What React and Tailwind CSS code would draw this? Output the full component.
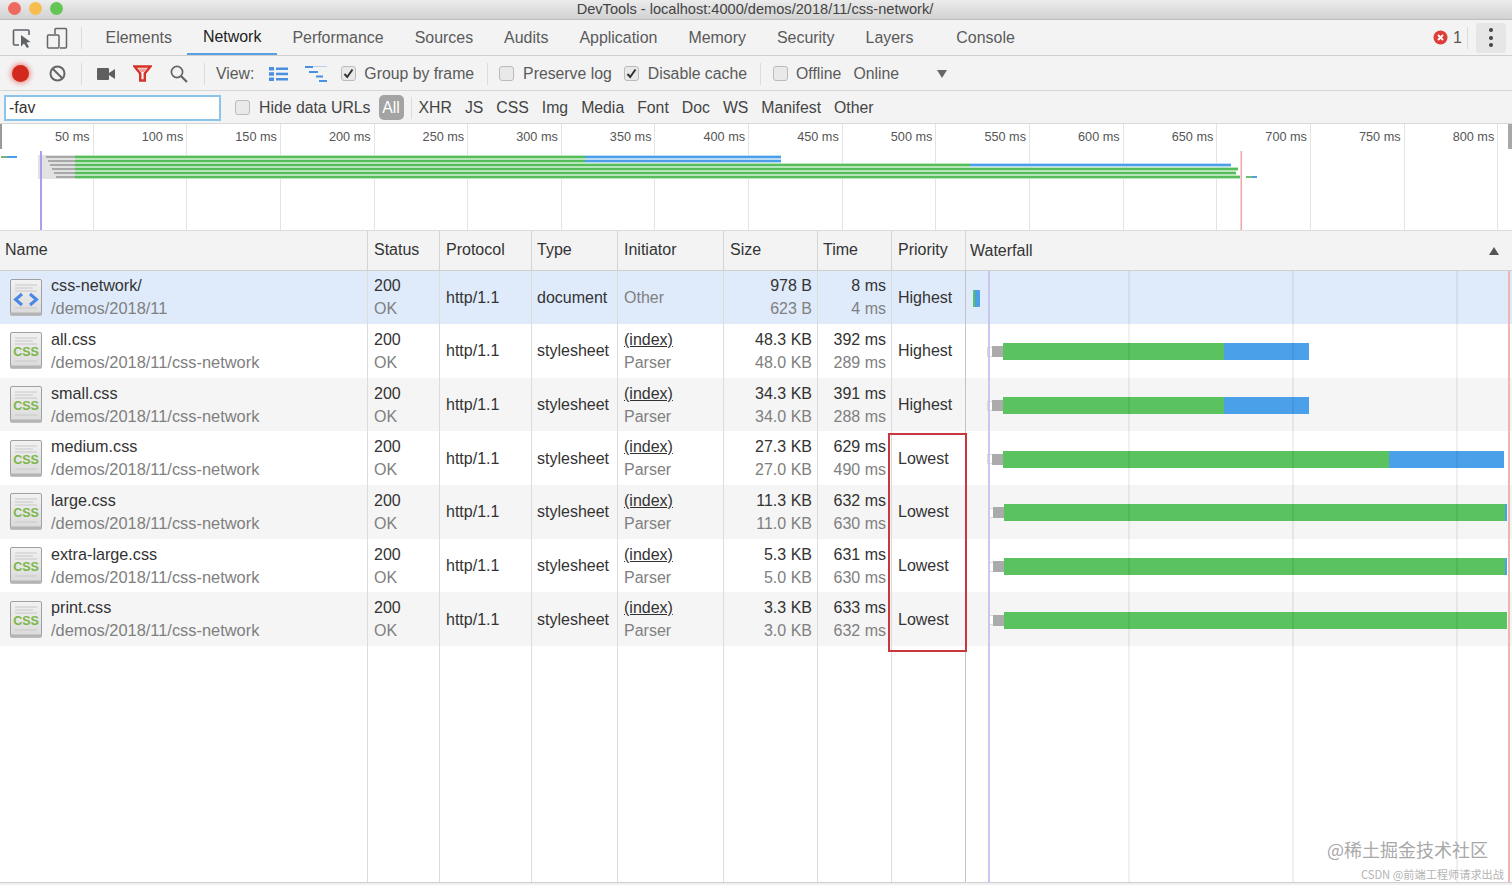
const font = { fontFamily: '"Liberation Sans", Arial, sans-serif' };

const COLS = "grid-cols-[368px_72px_92px_86px_106px_94px_74px_74px_546px]";

const tabs = ["Elements", "Network", "Performance", "Sources", "Audits", "Application", "Memory", "Security", "Layers"];
const filters = ["XHR", "JS", "CSS", "Img", "Media", "Font", "Doc", "WS", "Manifest", "Other"];
const ticks = [50, 100, 150, 200, 250, 300, 350, 400, 450, 500, 550, 600, 650, 700, 750, 800];

const rows = [
  { name: "css-network/", path: "/demos/2018/11", type: "document", html: true, init: "Other", size: ["978 B", "623 B"], time: ["8 ms", "4 ms"], priority: "Highest" },
  { name: "all.css", path: "/demos/2018/11/css-network", type: "stylesheet", size: ["48.3 KB", "48.0 KB"], time: ["392 ms", "289 ms"], priority: "Highest", green: 221, blue: 85, start: 21 },
  { name: "small.css", path: "/demos/2018/11/css-network", type: "stylesheet", size: ["34.3 KB", "34.0 KB"], time: ["391 ms", "288 ms"], priority: "Highest", green: 221, blue: 85, start: 21 },
  { name: "medium.css", path: "/demos/2018/11/css-network", type: "stylesheet", size: ["27.3 KB", "27.0 KB"], time: ["629 ms", "490 ms"], priority: "Lowest", green: 386, blue: 115, start: 21 },
  { name: "large.css", path: "/demos/2018/11/css-network", type: "stylesheet", size: ["11.3 KB", "11.0 KB"], time: ["632 ms", "630 ms"], priority: "Lowest", green: 501, blue: 2, start: 22 },
  { name: "extra-large.css", path: "/demos/2018/11/css-network", type: "stylesheet", size: ["5.3 KB", "5.0 KB"], time: ["631 ms", "630 ms"], priority: "Lowest", green: 501, blue: 2, start: 22 },
  { name: "print.css", path: "/demos/2018/11/css-network", type: "stylesheet", size: ["3.3 KB", "3.0 KB"], time: ["633 ms", "632 ms"], priority: "Lowest", green: 503, blue: 0, start: 22 },
];

const headers = ["Name", "Status", "Protocol", "Type", "Initiator", "Size", "Time", "Priority"];

function Checkbox({ checked }) {
  return (
    <span className="flex h-[15px] w-[15px] shrink-0 items-center justify-center rounded-[3px] border border-[#bbb] bg-[#e9e9e9]">
      {checked && (
        <svg width="11" height="11" viewBox="0 0 11 11">
          <path d="M1.5 6 L4.2 9 L9.5 1.5" fill="none" stroke="#333" strokeWidth="2" />
        </svg>
      )}
    </span>
  );
}

function Sep({ className }) {
  return <span className={`h-[22px] w-px shrink-0 bg-[#dcdcdc] ${className}`} />;
}

function FileIcon({ html }) {
  return (
    <svg width="32" height="37" viewBox="0 0 32 37" className="shrink-0">
      <defs>
        <linearGradient id="page" x1="0" y1="0" x2="0" y2="1">
          <stop offset="0" stopColor="#f2f2f2" />
          <stop offset="1" stopColor="#dadada" />
        </linearGradient>
      </defs>
      <rect x="0.5" y="0.5" width="31" height="35.5" rx="1.5" fill="url(#page)" stroke="#a0a0a0" />
      <rect x="0.5" y="33.5" width="31" height="3" fill="#b4b4b4" />
      <path d="M5 6h22M5 9h18M5 12h22M5 29h22" stroke="#c8c8c8" strokeWidth="1" />
      {html ? (
        <path d="M12 15 L5.5 20.5 L12 26 M20 15 L26.5 20.5 L20 26" fill="none" stroke="#4a86e8" strokeWidth="3" />
      ) : (
        <text x="16" y="24" textAnchor="middle" fontSize="12.5" fontWeight="700" fill="#7cb648" style={font}>CSS</text>
      )}
    </svg>
  );
}

function TwoLine({ top, bottom, right, underline }) {
  return (
    <div className={`flex h-full flex-col justify-center leading-[23px] ${right ? "items-end pr-[6px]" : "pl-[6px]"}`}>
      <span className={`text-[#333] ${underline ? "underline" : ""}`}>{top}</span>
      <span className="text-[#808080]">{bottom}</span>
    </div>
  );
}

function WaterfallBar({ row }) {
  if (!row.green) {
    return (
      <div className="flex h-full items-center pl-[7px] pt-[2px]">
        <span className="h-[17px] w-[2px] bg-[#5bc25f]" />
        <span className="h-[17px] w-[5px] rounded-r-[1px] bg-[#4a9fe8]" />
      </div>
    );
  }
  return (
    <div className="flex h-full items-center pt-[2px]" style={{ paddingLeft: row.start }}>
      <span className="h-[10px] w-[5px] border border-r-0 border-[#dcdcdc] bg-white" />
      <span className="h-[11px] w-[11px] bg-[#ababab]" />
      <span className="h-[17px] bg-[#5ac25e]" style={{ width: row.green }} />
      {row.blue > 0 && <span className="h-[17px] bg-[#4ba0ea]" style={{ width: row.blue }} />}
    </div>
  );
}

function Overview() {
  const lines = [
    [157, 585, 781],
    [161, 585, 781],
    [165, 970, 1231],
    [169, 1238, 1238],
    [173, 1236, 1236],
    [177, 1240, 1240],
  ];
  return (
    <svg width="1512" height="106" viewBox="0 124 1512 106" className="pointer-events-none absolute left-0 top-0">
      <rect x="0" y="124" width="2" height="25" fill="#9a9a9a" />
      <rect x="1508" y="124" width="4" height="25" fill="#a8a8a8" />
      <rect x="1" y="156" width="6" height="2" fill="#80b080" />
      <rect x="7" y="156" width="10" height="2" fill="#4a9fe8" />
      {lines.map(([y, g, b], i) => (
        <g key={i}>
          <rect x="38" y={y - 2} width="37" height="4" fill="#e2e2e2" />
          <rect x={46 + i * 2} y={y - 1} width={29 - i * 2} height="2" fill="#a8a8a8" />
          <rect x="75" y={y - 2} width={b - 75} height="4" fill="#b8e6bb" />
          <rect x="75" y={y - 1} width={g - 75} height="2" fill="#55bd5a" />
          {b > g && (
            <>
              <rect x={g} y={y - 2} width={b - g} height="4" fill="#bcdcf6" />
              <rect x={g} y={y - 1} width={b - g} height="2" fill="#4a9fe8" />
            </>
          )}
        </g>
      ))}
      <rect x="1246" y="176" width="6" height="2" fill="#6cc070" />
      <rect x="1252" y="176" width="5" height="2" fill="#4a9fe8" />
      <rect x="40" y="151" width="2" height="79" fill="#a9a0ea" />
      <rect x="1240.5" y="151" width="1.5" height="79" fill="#eba9a4" />
    </svg>
  );
}

export default function App() {
  return (
    <div className="relative flex h-[885px] w-[1512px] flex-col overflow-hidden bg-white text-[16px] text-[#444]" style={font}>
      {/* title bar */}
      <div className="relative flex h-[20px] shrink-0 items-center justify-center border-b border-[#bdbdbd] bg-gradient-to-b from-[#ececec] to-[#d2d2d2] pr-[2px] text-[14.6px] text-[#444]">
        <div className="absolute left-[8px] top-[2px] flex gap-[8px]">
          <span className="h-[13px] w-[13px] rounded-full bg-[#ee6a5f]" />
          <span className="h-[13px] w-[13px] rounded-full bg-[#f6bd4f]" />
          <span className="h-[13px] w-[13px] rounded-full bg-[#62c554]" />
        </div>
        DevTools - localhost:4000/demos/2018/11/css-network/
      </div>

      {/* panel tabs */}
      <div className="flex h-[36px] shrink-0 items-center border-b border-[#d0d0d0] bg-[#f3f3f3] pl-[12px]">
        <svg width="20" height="22" viewBox="0 0 20 22" fill="none" stroke="#5f6368" strokeWidth="1.6" className="shrink-0">
          <path d="M7 18 H2.5 a1 1 0 0 1 -1 -1 V4 a1 1 0 0 1 1 -1 H16 a1 1 0 0 1 1 1 V8" />
          <path d="M9 8 L9 19.5 L12 16.5 L15 21 L17 20 L14.5 15.5 L18.5 15 Z" fill="#5f6368" stroke="none" />
        </svg>
        <svg width="22" height="22" viewBox="0 0 22 22" fill="none" stroke="#666" strokeWidth="1.5" className="ml-[14px] shrink-0">
          <path d="M9 7 V2.5 a1 1 0 0 1 1 -1 H19.5 a1 1 0 0 1 1 1 V20 a1 1 0 0 1 -1 1 H14" />
          <rect x="1.5" y="8" width="11.5" height="13" rx="1" />
        </svg>
        <Sep className="ml-[13px]" />
        <div className="ml-[8px] flex h-full items-stretch text-[15.95px]">
          {tabs.map((t) => (
            <div
              key={t}
              className={`flex items-center px-[15.5px] ${t === "Network" ? "border-b-2 border-[#5a9fe0] text-[#222]" : "text-[#5a5a5a]"}`}
            >
              {t}
            </div>
          ))}
          <div className="ml-[12px] flex items-center px-[15.5px] text-[#5a5a5a]">Console</div>
        </div>
        <div className="ml-auto flex h-full items-center">
          <svg width="15" height="15" viewBox="0 0 15 15" className="shrink-0">
            <circle cx="7.5" cy="7.5" r="7" fill="#dc3f3a" />
            <path d="M5 5 L10 10 M10 5 L5 10" stroke="#fff" strokeWidth="1.8" />
          </svg>
          <span className="ml-[5px] text-[#555]">1</span>
          <Sep className="ml-[5px]" />
          <div className="ml-[8px] mr-[6px] flex h-[30px] w-[30px] flex-col items-center justify-center gap-[3.5px] rounded-[3px] bg-[#e6e6e6]">
            <span className="h-[4px] w-[4px] rounded-full bg-[#444]" />
            <span className="h-[4px] w-[4px] rounded-full bg-[#444]" />
            <span className="h-[4px] w-[4px] rounded-full bg-[#444]" />
          </div>
        </div>
      </div>

      {/* network toolbar */}
      <div className="flex h-[35px] shrink-0 items-center border-b border-[#d8d8d8] bg-[#f3f3f3] pl-[12px] pt-[1px] text-[15.8px] text-[#5a5a5a]">
        <span className="h-[17px] w-[17px] shrink-0 rounded-full bg-[#d2281e] shadow-[0_0_4px_2px_rgba(230,90,80,0.55)]" />
        <svg width="17" height="17" viewBox="0 0 17 17" fill="none" stroke="#666" strokeWidth="2" className="ml-[20px] shrink-0">
          <circle cx="8.5" cy="8.5" r="7" />
          <path d="M3.7 3.7 L13.3 13.3" />
        </svg>
        <Sep className="ml-[15px]" />
        <svg width="18" height="12" viewBox="0 0 18 12" className="ml-[15px] shrink-0">
          <rect x="0" y="0" width="12" height="12" rx="1" fill="#5f5f5f" />
          <path d="M12 5 L18 1 V11 L12 7 Z" fill="#5f5f5f" />
        </svg>
        <svg width="19" height="17" viewBox="0 0 19 17" fill="none" className="ml-[18px] shrink-0">
          <path d="M1.5 1.5 H17.5 L11.8 8.5 V15.5 H7.2 V8.5 Z" stroke="#d6322a" strokeWidth="2.4" />
          <path d="M5 3.5 H14 L11 7 H8 Z" fill="#eba09a" />
        </svg>
        <svg width="18" height="18" viewBox="0 0 18 18" fill="none" stroke="#666" strokeWidth="1.7" className="ml-[18px] shrink-0">
          <circle cx="7" cy="7" r="5.6" />
          <path d="M11 11 L17 17" strokeWidth="2.2" />
        </svg>
        <Sep className="ml-[16px]" />
        <span className="ml-[11px]">View:</span>
        <svg width="19" height="14" viewBox="0 0 19 14" fill="#4a90e2" className="ml-[15px] shrink-0">
          <rect x="0" y="0" width="5" height="3.5" />
          <rect x="0" y="5.2" width="5" height="3.5" />
          <rect x="0" y="10.5" width="5" height="3.5" />
          <rect x="7" y="0.5" width="12" height="2.5" />
          <rect x="7" y="5.7" width="12" height="2.5" />
          <rect x="7" y="11" width="12" height="2.5" />
        </svg>
        <svg width="22" height="16" viewBox="0 0 22 16" fill="#4a90e2" className="ml-[17px] shrink-0">
          <rect x="0" y="0" width="8" height="2" />
          <rect x="8" y="0" width="14" height="1" opacity="0.35" />
          <rect x="4" y="5" width="9" height="2" />
          <rect x="11" y="9.5" width="7" height="2" />
          <rect x="14" y="14" width="8" height="2" />
        </svg>
        <span className="ml-[14px] flex items-center gap-[8px]">
          <Checkbox checked />
          Group by frame
        </span>
        <Sep className="ml-[13px]" />
        <span className="ml-[11px] flex items-center gap-[9px]">
          <Checkbox />
          Preserve log
        </span>
        <span className="ml-[12px] flex items-center gap-[9px]">
          <Checkbox checked />
          Disable cache
        </span>
        <Sep className="ml-[13px]" />
        <span className="ml-[12px] flex items-center gap-[8px]">
          <Checkbox />
          Offline
        </span>
        <span className="ml-[12px]">Online</span>
        <svg width="10" height="8" viewBox="0 0 10 8" className="ml-[38px] shrink-0">
          <path d="M0 0 H10 L5 8 Z" fill="#666" />
        </svg>
      </div>

      {/* filter bar */}
      <div className="flex h-[33px] shrink-0 items-center border-b border-[#d8d8d8] bg-[#f3f3f3] pl-[4px] pt-[1px] text-[15.8px] text-[#444]">
        <div className="flex h-[26px] w-[217px] shrink-0 items-center border-2 border-[#8ac4ea] bg-white pl-[3px] text-[#333]">-fav</div>
        <span className="ml-[14px]"><Checkbox /></span>
        <span className="ml-[9px]">Hide data URLs</span>
        <span className="ml-[8px] flex h-[25px] w-[25px] items-center justify-center rounded-[5px] bg-[#a3a3a3] text-white">All</span>
        <Sep className="ml-[7px]" />
        <div className="ml-[7px] flex items-center gap-[13px]">
          {filters.map((f) => (
            <span key={f}>{f}</span>
          ))}
        </div>
      </div>

      {/* timeline overview */}
      <div className="relative flex h-[107px] shrink-0 border-b border-[#dcdcdc] bg-white">
        {ticks.map((t) => (
          <div key={t} className="h-full w-[93.65px] shrink-0 border-r border-[#e4e4e4] pr-[3px] pt-[4px] text-right text-[12.7px] text-[#555]">
            {t} ms
          </div>
        ))}
        <Overview />
      </div>

      {/* table header */}
      <div className={`grid h-[39.5px] shrink-0 ${COLS} border-b border-[#d0d0d0] bg-[#f3f3f3] text-[#333]`}>
        {headers.map((h) => (
          <div
            key={h}
            className={`flex items-center border-r border-[#d4d4d4] pb-[1px] ${h === "Name" || h === "Type" || h === "Time" ? "pl-[5px]" : "pl-[6px]"}`}
          >
            {h}
          </div>
        ))}
        <div className="flex items-center justify-between pl-[4px] pr-[13px] pt-[1px]">
          Waterfall
          <svg width="10" height="8" viewBox="0 0 10 8">
            <path d="M5 0 L10 8 H0 Z" fill="#555" />
          </svg>
        </div>
      </div>

      {/* table body */}
      <div className="relative min-h-0 flex-1 border-b border-[#cfcfcf]">
        <div className="flex flex-col">
          {rows.map((r, i) => (
            <div
              key={r.name}
              className={`grid h-[53.67px] ${COLS} ${i === 0 ? "bg-[#dfebfb]" : i % 2 === 0 ? "bg-[#f5f5f5]" : "bg-white"}`}
            >
              <div className="flex items-center pl-[10px]">
                <FileIcon html={r.html} />
                <div className="ml-[9px] flex flex-col leading-[23px]">
                  <span className="text-[16.2px] text-[#333]">{r.name}</span>
                  <span className="text-[16.4px] text-[#808080]">{r.path}</span>
                </div>
              </div>
              <TwoLine top="200" bottom="OK" />
              <div className="flex items-center pl-[6px] pt-[1px] text-[#333]">http/1.1</div>
              <div className="flex items-center pl-[5px] pt-[1px] text-[#333]">{r.type}</div>
              {r.init === "Other" ? (
                <div className="flex items-center pl-[6px] pt-[1px] text-[#808080]">Other</div>
              ) : (
                <TwoLine top="(index)" bottom="Parser" underline />
              )}
              <TwoLine top={r.size[0]} bottom={r.size[1]} right />
              <TwoLine top={r.time[0]} bottom={r.time[1]} right />
              <div className="flex items-center pl-[6px] pt-[1px] text-[#333]">{r.priority}</div>
              <WaterfallBar row={r} />
            </div>
          ))}
        </div>

        {/* column rules run down through the empty part of the table */}
        <div className={`pointer-events-none absolute inset-0 grid ${COLS}`}>
          {headers.map((h) => (
            <div key={h} className={`border-r ${h === "Priority" ? "border-[#c4c4c4]" : "border-[#dcdcdc]"}`} />
          ))}
        </div>
        <div className="pointer-events-none absolute inset-y-0 left-[988px] w-[2px] bg-[#c9c6f2]" />
        <div className="pointer-events-none absolute inset-y-0 left-[1128px] w-[2px] bg-[rgba(0,0,0,0.06)]" />
        <div className="pointer-events-none absolute inset-y-0 left-[1292px] w-[2px] bg-[rgba(0,0,0,0.06)]" />
        <div className="pointer-events-none absolute inset-y-0 left-[1456px] w-[2px] bg-[rgba(0,0,0,0.06)]" />
        <div className="pointer-events-none absolute inset-y-0 left-[1508px] w-[2px] bg-[#eeb4b0]" />

        {/* red annotation box */}
        <div className="pointer-events-none absolute left-[888px] top-[162px] h-[219px] w-[79px] border-2 border-[#c9363c]" />

        {/* watermarks */}
        <div className="pointer-events-none absolute right-[24px] top-[565px] text-[18px] text-[#a8a8a8]" style={{ fontFamily: '"Noto Sans CJK SC", sans-serif' }}>
          @稀土掘金技术社区
        </div>
        <div className="pointer-events-none absolute right-[8px] top-[595px] text-[11.2px] text-[#b4b4b4]" style={{ fontFamily: '"Noto Sans CJK SC", sans-serif' }}>
          CSDN @前端工程师请求出战
        </div>
      </div>
      <div className="h-[2px] shrink-0 bg-[#f0f0f0]" />
    </div>
  );
}
